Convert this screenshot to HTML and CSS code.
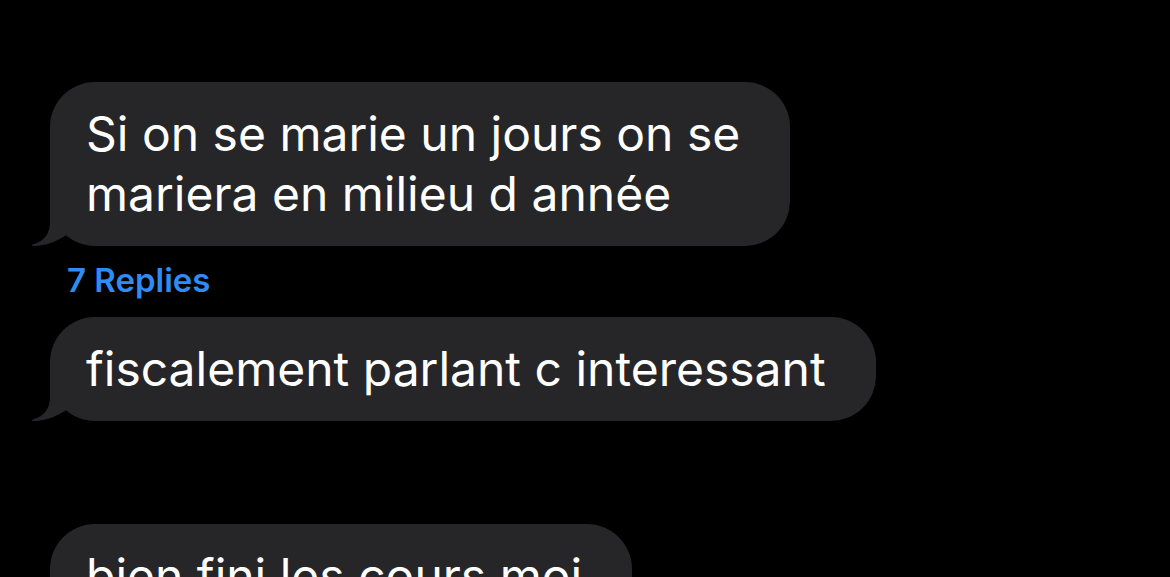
FILE: index.html
```html
<!DOCTYPE html>
<html lang="fr">
<head>
<meta charset="utf-8">
<link rel="stylesheet" href="styles.css">
</head>
<body>
<main class="thread">
  <div class="msg msg-first">
    <div class="bubble">
      <span class="text">Si on se marie un jours on se<br>mariera en milieu d année</span>
      <svg class="tail" viewBox="32 186 40 60" width="40" height="60" aria-hidden="true"><path d="M50 186 L50 222 C50 234 44 241 33 244.5 C31 245.2 31.5 246 34 246 C46 246 58 241 68 234 L68 186 Z"/></svg>
    </div>
    <div class="replies">7 Replies</div>
  </div>
  <div class="msg">
    <div class="bubble">
      <span class="text">fiscalement parlant c interessant</span>
      <svg class="tail" viewBox="32 186 40 60" width="40" height="60" aria-hidden="true"><path d="M50 186 L50 222 C50 234 44 241 33 244.5 C31 245.2 31.5 246 34 246 C46 246 58 241 68 234 L68 186 Z"/></svg>
    </div>
  </div>
  <div class="msg msg-later">
    <div class="bubble">
      <span class="text">bien fini les cours moi</span>
    </div>
  </div>
</main>
</body>
</html>
```

FILE: styles.css
```css
html, body {
  margin: 0;
  padding: 0;
  background: #000;
  height: 100%;
  overflow: hidden;
}

.thread {
  display: flex;
  flex-direction: column;
  padding: 82px 0 0 50px;
  font-family: Inter, "Liberation Sans", sans-serif;
}

.msg {
  display: flex;
  flex-direction: column;
  align-items: flex-start;
}

.bubble {
  position: relative;
  background: #262628;
  color: #fff;
  border-radius: 45px;
  padding: 22px 50px 22px 36px;
  font-size: 48px;
  line-height: 60px;
}

.tail {
  position: absolute;
  left: -18px;
  bottom: 0;
  fill: #262628;
}

.replies {
  color: #2f8bf5;
  font-size: 33px;
  font-weight: 600;
  line-height: 36px;
  padding: 16px 0 19px 17px;
}

.msg-later {
  margin-top: 103px;
}
```
